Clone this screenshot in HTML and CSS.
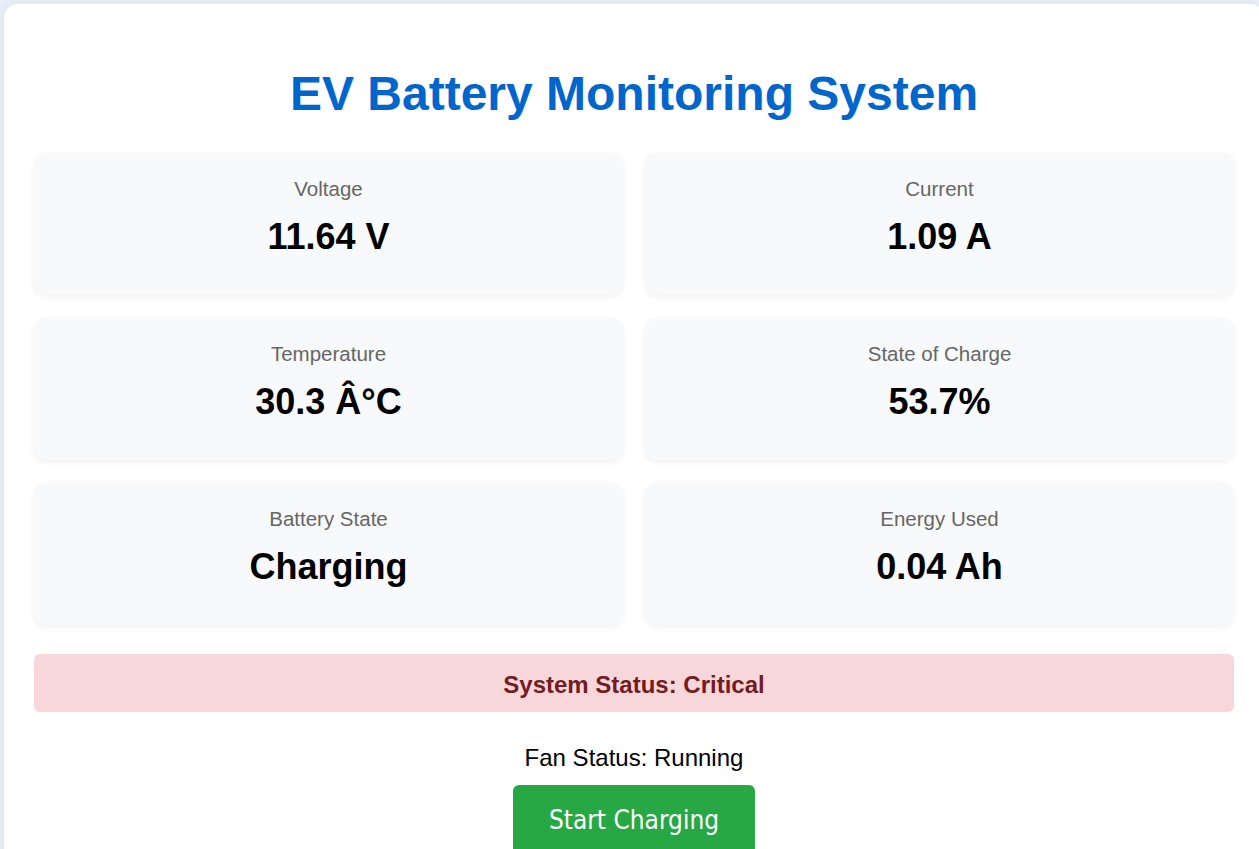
FILE: index.html
```html
<!DOCTYPE html>
<html lang="en">
<head>
<meta charset="utf-8">
<title>EV Battery Monitoring System</title>
<link rel="stylesheet" href="styles.css">
</head>
<body>
<div class="container">
  <h1 class="title">EV Battery Monitoring System</h1>
  <div class="grid">
    <div class="card">
      <div class="label">Voltage</div>
      <div class="value">11.64 V</div>
    </div>
    <div class="card">
      <div class="label">Current</div>
      <div class="value">1.09 A</div>
    </div>
    <div class="card">
      <div class="label">Temperature</div>
      <div class="value">30.3 Â°C</div>
    </div>
    <div class="card">
      <div class="label">State of Charge</div>
      <div class="value">53.7%</div>
    </div>
    <div class="card">
      <div class="label">Battery State</div>
      <div class="value">Charging</div>
    </div>
    <div class="card">
      <div class="label">Energy Used</div>
      <div class="value">0.04 Ah</div>
    </div>
  </div>
  <div class="status critical">System Status: Critical</div>
  <p class="fan">Fan Status: Running</p>
  <div class="actions">
    <button class="btn-charge" type="button">Start Charging</button>
  </div>
</div>
</body>
</html>
```

FILE: styles.css
```css
html, body {
  margin: 0;
  padding: 0;
  overflow: hidden;
}

body {
  background: #e7eef6;
  font-family: "Liberation Sans", Arial, sans-serif;
  padding: 4px 0 0 4px;
}

.container {
  width: 1200px;
  background: #ffffff;
  border-radius: 14px;
  padding: 30px;
  box-shadow: 0 0 10px rgba(0, 0, 0, 0.05);
  min-height: 900px;
}

.title {
  margin: 32px 0 32px;
  font-size: 48px;
  font-weight: bold;
  color: #0066cc;
  text-align: center;
  line-height: 55px;
}

.grid {
  display: grid;
  grid-template-columns: 1fr 1fr;
  gap: 23px 22px;
}

.card {
  background: #f8f9fa;
  border-radius: 12px;
  box-shadow: 0 2px 6px rgba(0, 0, 0, 0.06);
  height: 142px;
  box-sizing: border-box;
  padding-top: 24px;
  text-align: center;
}

.label {
  font-size: 20.5px;
  line-height: 23px;
  color: #666666;
}

.value {
  margin-top: 16px;
  font-size: 36px;
  line-height: 41px;
  font-weight: bold;
  color: #000000;
}

.status {
  margin-top: 29px;
  padding: 17px 15px 13px;
  border-radius: 6px;
  text-align: center;
  font-size: 24px;
  line-height: 28px;
  font-weight: bold;
}

.critical {
  background: #f8d7da;
  color: #721c24;
}

.fan {
  margin: 32px 0 0;
  font-size: 24px;
  line-height: 28px;
  text-align: center;
  color: #000000;
}

.actions {
  display: flex;
  justify-content: center;
  margin-top: 13px;
}

.btn-charge {
  background: #28a745;
  color: #ffffff;
  border: none;
  border-radius: 6px;
  padding: 20px 36px;
  font-family: "DejaVu Sans Condensed", "DejaVu Sans", sans-serif;
  font-stretch: condensed;
  font-size: 26px;
  line-height: 30px;
  cursor: pointer;
}
```
